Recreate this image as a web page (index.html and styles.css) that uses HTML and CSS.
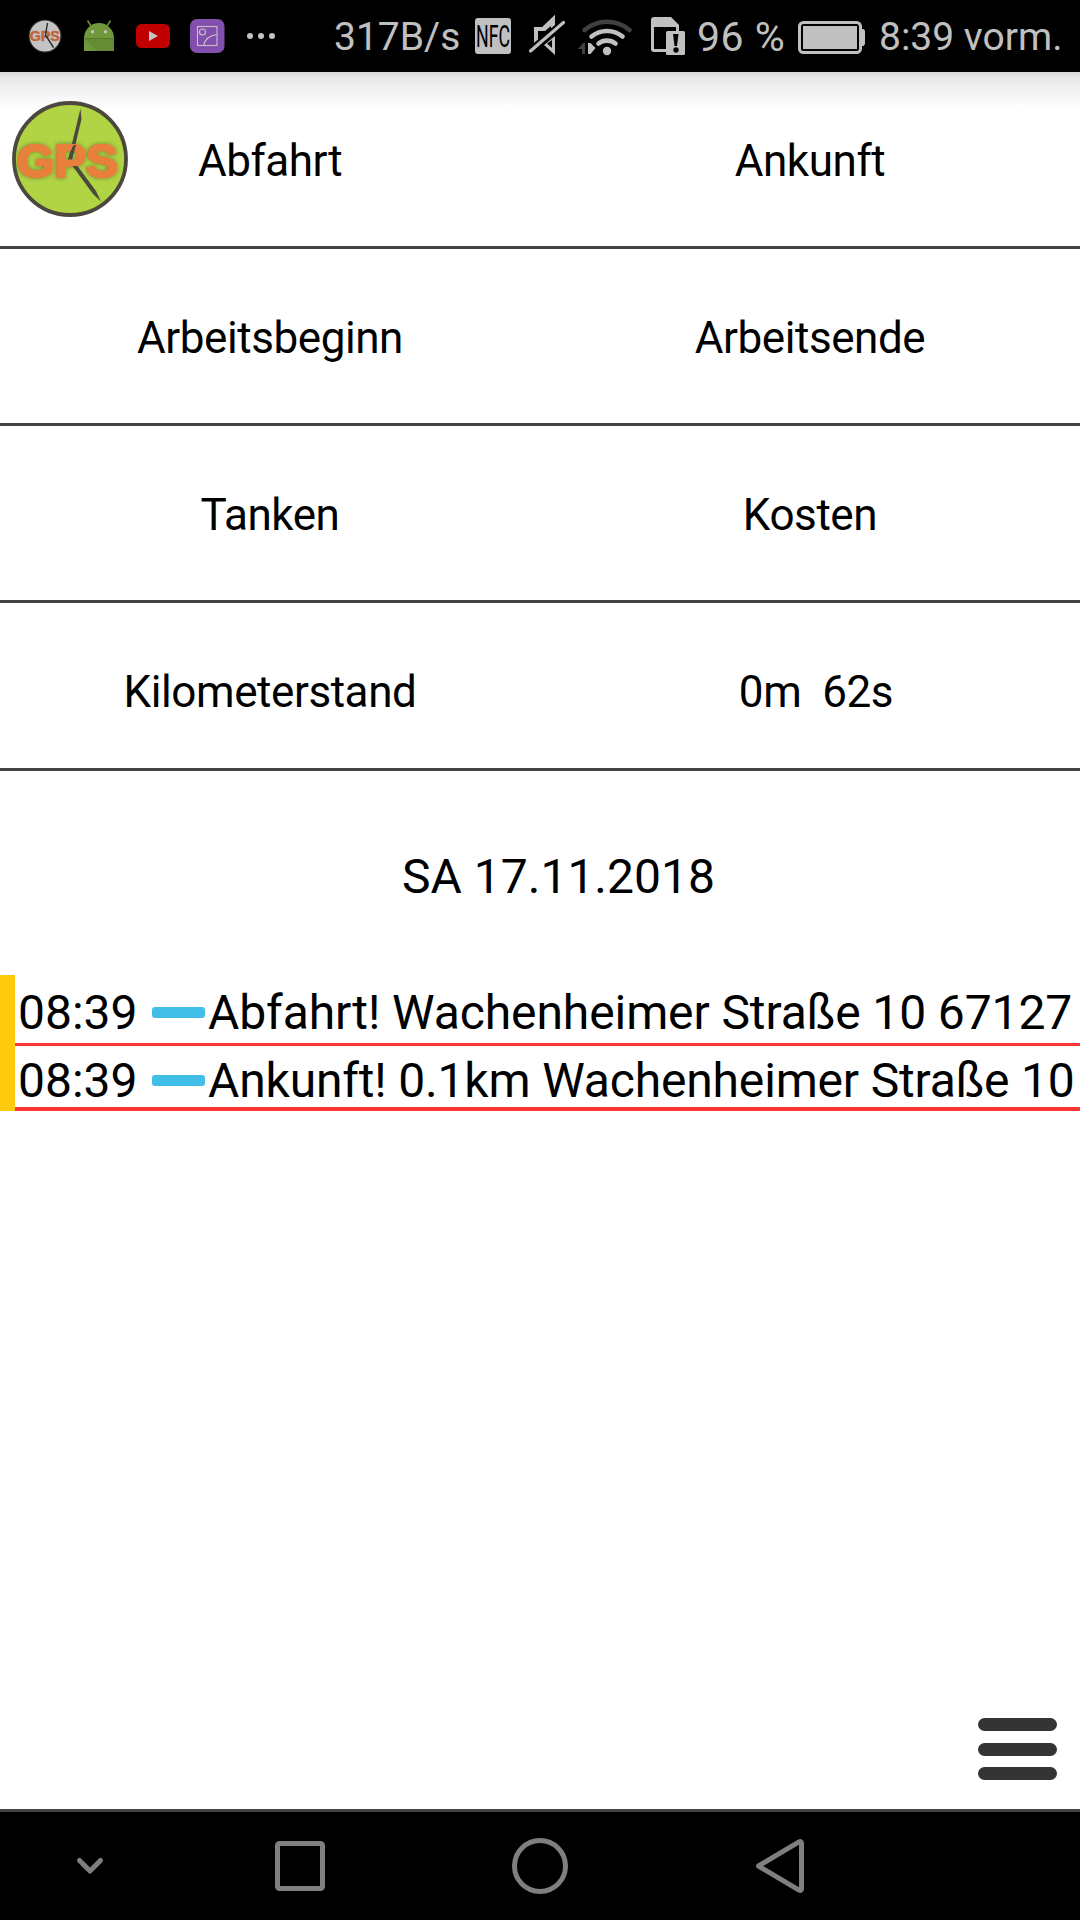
FILE: index.html
```html
<!DOCTYPE html>
<html lang="de">
<head>
<meta charset="utf-8">
<title>GPS Fahrtenbuch</title>
<link rel="stylesheet" href="styles.css">
</head>
<body>
<div class="screen">
  <header class="status">
    <svg class="i-gps" width="36" height="72" viewBox="27 0 36 72">
      <circle cx="45" cy="36" r="16" fill="#c4c4c4" stroke="#2c2b26" stroke-width="1.2"/>
      <text x="44.7" y="41" class="logo-text-small" textLength="30" lengthAdjust="spacingAndGlyphs">GPS</text>
      <path d="M47.5 23L45.5 35L53.5 47.5" fill="none" stroke="#2c2b26" stroke-width="1.4"/>
    </svg>
    <svg class="i-android" width="30" height="72" viewBox="84 0 30 72">
      <path d="M84 38A15 15 0 0 1 114 38V51H84Z" fill="#6f983a"/>
      <path d="M84 38.5H114V51H97Z" fill="#658b35"/>
      <path d="M84 38.5H114" stroke="#557a2c" stroke-width="1"/>
      <path d="M87.5 20.5L91 26M110.500 20.500L107 26" stroke="#6f983a" stroke-width="1.500"/>
      <circle cx="92.500" cy="31.700" r="1.700" fill="#c4c4c4"/><circle cx="105.500" cy="31.700" r="1.700" fill="#c4c4c4"/>
    </svg>
    <svg class="i-video" width="34" height="72" viewBox="136 0 34 72">
      <rect x="136" y="24" width="34" height="24" rx="5.500" fill="#c00000"/>
      <path d="M149 31L158 36L149 41Z" fill="#c4c4c4"/>
    </svg>
    <svg class="i-gallery" width="35" height="72" viewBox="190 0 35 72">
      <rect x="190" y="19" width="34.500" height="34" rx="7" fill="#834fae"/>
      <g fill="none" stroke="#c4c4c4" stroke-width="1.100"><rect x="197.500" y="26.500" width="19.500" height="19"/><circle cx="202.500" cy="32" r="3"/><path d="M203.500 45.500Q205.500 36 217 34.500"/></g>
    </svg>
    <svg class="i-more" width="28" height="72" viewBox="247 0 28 72" fill="#c4c4c4">
      <circle cx="250" cy="36" r="3"/><circle cx="261" cy="36" r="3"/><circle cx="272" cy="36" r="3"/>
    </svg>
    <span class="speed">317B/s</span>
    <svg class="i-nfc" width="36" height="72" viewBox="475 0 36 72">
      <rect x="475" y="18" width="36" height="36" rx="3" fill="#c0c0c0"/>
      <text x="476" y="46.500" class="nfc-text" textLength="34" lengthAdjust="spacingAndGlyphs">NFC</text>
    </svg>
    <svg class="i-mute" width="38" height="72" viewBox="528 0 38 72">
      <path d="M536 45V29H543L553 19.500V32" fill="none" stroke="#c0c0c0" stroke-width="4"/>
      <path d="M543 28L555 17V32L547 39Z" fill="#c0c0c0"/>
      <path d="M539 31H545L551 26V29L538 43Z" fill="#000"/>
      <path d="M555 36V55L544 45Z" fill="#c0c0c0"/>
      <path d="M552 40V48L547 43.500Z" fill="#000"/>
      <path d="M530 51L564 22" stroke="#000" stroke-width="7"/>
      <path d="M530.500 51L563.500 22.500" stroke="#c0c0c0" stroke-width="3.200" stroke-linecap="round"/>
    </svg>
    <svg class="i-wifi" width="55" height="72" viewBox="578 0 55 72">
      <g fill="none" stroke-width="4.600" stroke-linecap="round">
        <path d="M584.500 30A35 35 0 0 1 629.500 30" stroke="#404040"/>
        <path d="M591.500 36.500A24.500 24.500 0 0 1 622.500 36.500" stroke="#c0c0c0"/>
        <path d="M598.500 43.500A14 14 0 0 1 615.500 43.500" stroke="#c0c0c0"/>
      </g>
      <circle cx="607" cy="51" r="4.200" fill="#c0c0c0"/>
      <path d="M578 49L583 43H585V54H582V49Z" fill="#404040"/>
      <path d="M588 43H590.500V54H588ZM590.500 43L595.500 48L590.500 54Z" fill="#c0c0c0"/>
    </svg>
    <svg class="i-sim" width="34" height="72" viewBox="651 0 34 72">
      <path d="M654 17H671L679 25V31H676V27H654V49H666V52H654Q651 52 651 49V20Q651 17 654 17Z" fill="#c0c0c0"/>
      <rect x="666" y="31" width="19" height="24" rx="1.500" fill="#c0c0c0"/>
      <path d="M673 34H678.500L677 46H674.500Z" fill="#000"/><circle cx="676" cy="50" r="2.700" fill="#000"/>
    </svg>
    <span class="percent">96 %</span>
    <svg class="i-battery" width="67" height="72" viewBox="798 0 67 72">
      <rect x="799.500" y="22.500" width="61" height="30" rx="4" fill="none" stroke="#c0c0c0" stroke-width="3"/>
      <rect x="803" y="26" width="54" height="23" fill="#c0c0c0"/>
      <path d="M862 29H863.500L865 30.500V44L863.500 46H862Z" fill="#c0c0c0"/>
    </svg>
    <span class="clock">8:39 vorm.</span>
  </header>

  <main class="content">
    <div class="actions">
      <div class="action">
        <svg class="logo" width="116" height="116" viewBox="0 0 116 116">
          <circle cx="58" cy="58" r="56" fill="#b0d443" stroke="#4d483e" stroke-width="3.800"/>
          <text x="5" y="76" class="logo-text logo-glow" textLength="101" lengthAdjust="spacingAndGlyphs">GPS</text>
          <path d="M68.500 7.500L69.500 18L60 58L56.500 57Z" fill="#4d483e"/>
          <text x="5" y="76" class="logo-text" textLength="101" lengthAdjust="spacingAndGlyphs">GPS</text>
          <path d="M61.500 44H64L60 58.500H56Q58 50 61.500 44Z" fill="#4d483e"/>
          <path d="M60.500 65H65.500L84 90L89 100.500L81 93Z" fill="#4d483e"/>
        </svg>
        Abfahrt
      </div>
      <div class="action">Ankunft</div>
      <div class="action">Arbeitsbeginn</div>
      <div class="action">Arbeitsende</div>
      <div class="action">Tanken</div>
      <div class="action">Kosten</div>
      <div class="action last">Kilometerstand</div>
      <div class="action last counter">0m&nbsp; 62s</div>
    </div>

    <h1 class="date">SA 17.11.2018</h1>

    <ul class="log">
      <li class="entry first"><span class="time">08:39</span><i class="dash"></i><span class="event">Abfahrt! Wachenheimer Straße 10 67127</span></li>
      <li class="entry second"><span class="time">08:39</span><i class="dash"></i><span class="event">Ankunft! 0.1km Wachenheimer Straße 10</span></li>
    </ul>

    <div class="menu"><i></i><i></i><i></i></div>
  </main>

  <nav class="nav">
    <svg class="n-hide" width="28" height="108" viewBox="76 0 28 108"><path d="M79.500 48.500L90 59L100.500 48.500" stroke-width="5"/></svg>
    <svg class="n-recent" width="50" height="108" viewBox="275 0 50 108"><rect x="277.500" y="31.500" width="45" height="45" rx="2" stroke-width="5"/></svg>
    <svg class="n-home" width="56" height="108" viewBox="512 0 56 108"><circle cx="540" cy="54" r="25.500" stroke-width="5"/></svg>
    <svg class="n-back" width="48" height="108" viewBox="756 0 48 108"><path d="M758.500 54L799 29.800Q801.500 29 801.500 31V77Q801.500 79 799 78.200Z" stroke-width="5"/></svg>
  </nav>
</div>
</body>
</html>
```
FILE: styles.css
```css
* { box-sizing: border-box; }
body { margin: 0; font-family: Roboto, sans-serif; color: #000; }
.screen { width: 1080px; height: 1920px; display: flex; flex-direction: column; overflow: hidden; background: #fff; }
svg { display: block; flex: none; overflow: visible; }

.status { height: 72px; flex: none; display: flex; background: #000; color: #c0c0c0; padding-left: 27px; font-size: 39px; line-height: 74px; white-space: nowrap; }
.status span { flex: none; }
.i-android { margin-left: 21px; }
.i-video { margin-left: 22px; }
.i-gallery { margin-left: 20px; }
.i-more { margin-left: 22px; }
.speed { width: 141px; margin-left: 59px; }
.i-mute { margin-left: 17px; }
.i-wifi { margin-left: 12px; }
.i-sim { margin-left: 18px; }
.percent { width: 101px; margin-left: 12px; font-size: 41px; letter-spacing: 0.5px; }
.clock { margin-left: 14px; }
.logo-text-small { font: bold 15px "Liberation Sans", sans-serif; fill: #c0653a; stroke: #c0653a; stroke-width: 0.5px; text-anchor: middle; }
.nfc-text { font: 400 31px Roboto, sans-serif; fill: #000; }

.content { flex: 1; display: flex; flex-direction: column; background: linear-gradient(#d8d8d8, #e6e6e6 6px, #f2f2f2 18px, #fdfdfd 34px, #fff 42px); }
.actions { display: grid; grid-template-columns: 1fr 1fr; grid-template-rows: 177px 177px 177px 168px; }
.action { position: relative; text-align: center; font-size: 44px; letter-spacing: -0.43px; line-height: 178px; border-bottom: 3px solid #444; white-space: nowrap; }
.counter { padding-left: 12px; }
.logo { position: absolute; left: 12px; top: 29px; letter-spacing: 0; }
.logo-text { font: bold 47px "Liberation Sans", sans-serif; fill: #e8803c; stroke: #e8803c; stroke-width: 2px; }
.logo-glow { filter: drop-shadow(0 0 2px #6f7a30); }

.date { margin: 0; height: 204px; padding-left: 37px; text-align: center; font-size: 48px; font-weight: 400; line-height: 212px; }

.log { list-style: none; margin: 0; padding: 0; border-left: 15px solid #ffc90e; }
.entry { display: flex; font-size: 48px; white-space: nowrap; }
.first { height: 71px; line-height: 76px; border-bottom: 3px solid #ff3535; }
.second { height: 65px; line-height: 69px; border-bottom: 4px solid #ff3535; }
.time { width: 134px; flex: none; padding-left: 3px; }
.dash { width: 53px; height: 11px; margin: 32px 3px 0 3px; border-radius: 3px; background: #41bfe8; flex: none; }
.second .dash { margin-top: 29px; }
.first .event { letter-spacing: -0.1px; }
.second .event { letter-spacing: -0.17px; }

.menu { margin: auto 23px 29px auto; width: 79px; height: 62px; display: flex; flex-direction: column; justify-content: space-between; }
.menu i { height: 13px; border-radius: 7px; background: #343434; }

.nav { height: 111px; flex: none; display: flex; background: #000; border-top: 3px solid #444; padding-left: 76px; }
.nav svg { fill: none; stroke: #7f7f7f; stroke-linecap: round; stroke-linejoin: round; }
.n-recent { margin-left: 171px; }
.n-home { margin-left: 187px; }
.n-back { margin-left: 188px; }
```
